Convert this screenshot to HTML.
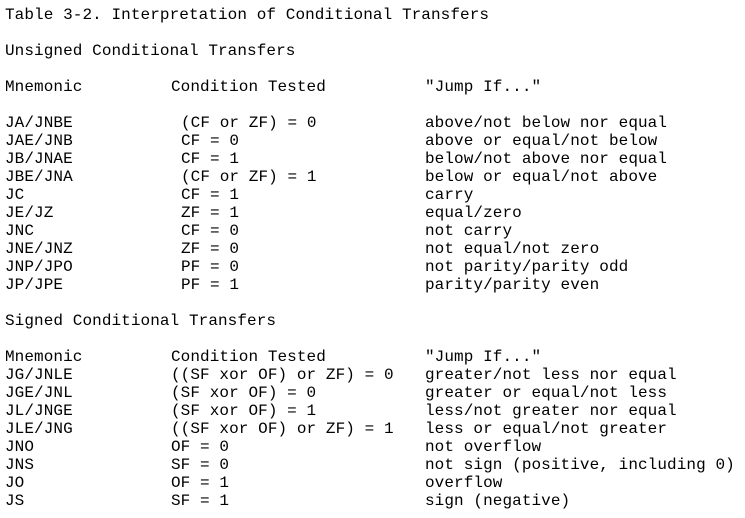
<!DOCTYPE html>
<html><head><meta charset="utf-8"><style>
html,body{margin:0;padding:0;background:#fff;width:745px;height:518px;overflow:hidden}
body{position:relative;font-family:"Liberation Mono","Courier New",monospace;font-size:16px;color:#000;letter-spacing:0.08px}
.r{position:absolute;height:18px;line-height:18px;white-space:pre}
</style></head><body>
<div id="c"></div>
<script>
const rows=[
[0,"Table 3-2. Interpretation of Conditional Transfers"],
[2,"Unsigned Conditional Transfers"],
[4,"Mnemonic","Condition Tested","\"Jump If...\"",171],
[6,"JA/JNBE","(CF or ZF) = 0","above/not below nor equal",181],
[7,"JAE/JNB","CF = 0","above or equal/not below",181],
[8,"JB/JNAE","CF = 1","below/not above nor equal",181],
[9,"JBE/JNA","(CF or ZF) = 1","below or equal/not above",181],
[10,"JC","CF = 1","carry",181],
[11,"JE/JZ","ZF = 1","equal/zero",181],
[12,"JNC","CF = 0","not carry",181],
[13,"JNE/JNZ","ZF = 0","not equal/not zero",181],
[14,"JNP/JPO","PF = 0","not parity/parity odd",181],
[15,"JP/JPE","PF = 1","parity/parity even",181],
[17,"Signed Conditional Transfers"],
[19,"Mnemonic","Condition Tested","\"Jump If...\"",171],
[20,"JG/JNLE","((SF xor OF) or ZF) = 0","greater/not less nor equal",171],
[21,"JGE/JNL","(SF xor OF) = 0","greater or equal/not less",171],
[22,"JL/JNGE","(SF xor OF) = 1","less/not greater nor equal",171],
[23,"JLE/JNG","((SF xor OF) or ZF) = 1","less or equal/not greater",171],
[24,"JNO","OF = 0","not overflow",171],
[25,"JNS","SF = 0","not sign (positive, including 0)",171],
[26,"JO","OF = 1","overflow",171],
[27,"JS","SF = 1","sign (negative)",171]];
let h="";
for(const r of rows){const t=6+18*r[0];
h+=`<div class="r" style="left:5px;top:${t}px">${r[1]}</div>`;
if(r[2]){h+=`<div class="r" style="left:${r[4]}px;top:${t}px">${r[2]}</div>`;
h+=`<div class="r" style="left:425px;top:${t}px">${r[3]}</div>`;}}
document.getElementById("c").innerHTML=h;
</script>
</body></html>
